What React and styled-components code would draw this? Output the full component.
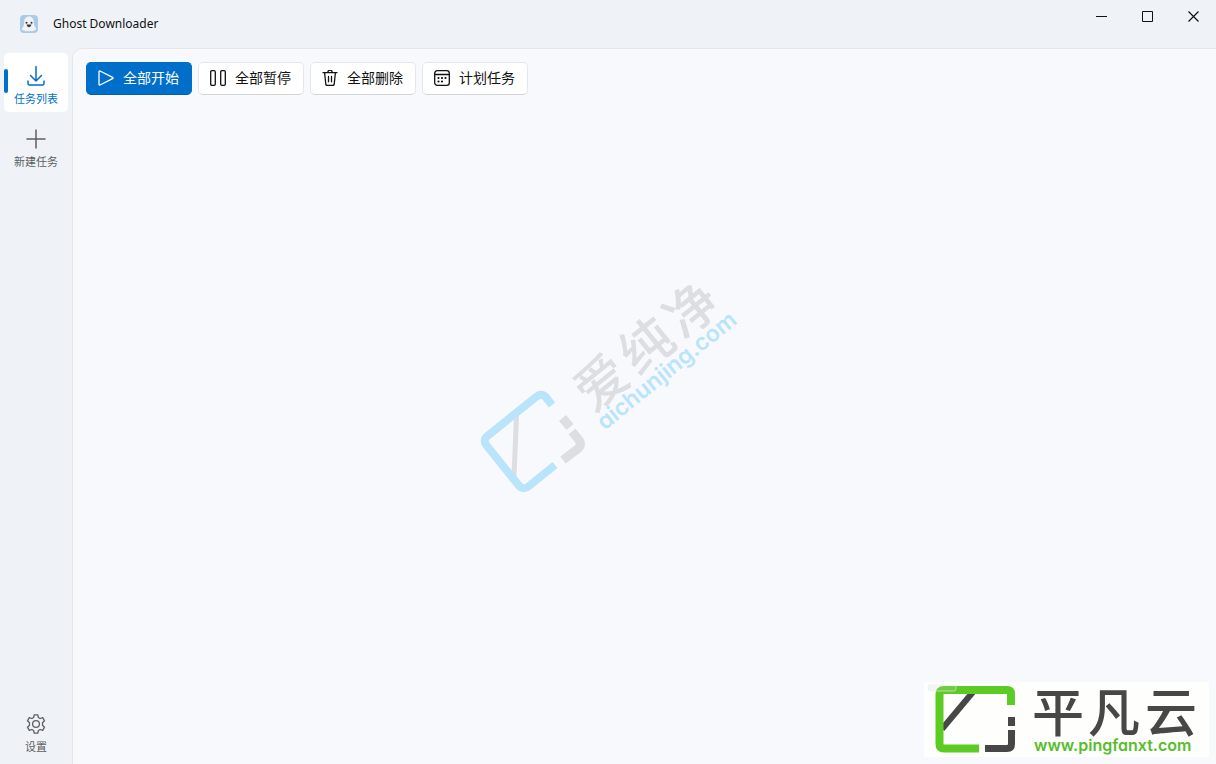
import React from "react";
import styled, { createGlobalStyle } from "styled-components";

const colors = {
    chrome: "#eff3f8",
    page: "#f8f9fd",
    line: "#e3e7ec",
    accent: "#006fca",
    muted: "#5d5f62",
    sky: "#b9e4fa",
    fog: "#dddee2",
    green: "#5ccb24",
    coal: "#474747",
};

const GlobalStyle = createGlobalStyle`
    * {
        box-sizing: border-box;
    }

    body {
        margin: 0;
        background: ${colors.chrome};
        font-family: "Noto Sans", "Noto Sans CJK SC", sans-serif;
    }

    button {
        font-family: inherit;
        cursor: pointer;
    }
`;

const Window = styled.div`
    display: flex;
    flex-direction: column;
    min-height: 100vh;
    position: relative;
    overflow: hidden;
`;

const TitleBar = styled.header`
    display: flex;
    align-items: center;
    height: 48px;
    padding-left: 20px;
`;

const Title = styled.h1`
    flex: 1;
    margin: 0 0 0 15px;
    font-size: 12px;
    font-weight: 400;
    line-height: 20px;
    color: #111;
`;

const WindowButtons = styled.div`
    display: flex;
    align-self: flex-start;
`;

const WindowButton = styled.button`
    display: flex;
    align-items: center;
    justify-content: center;
    width: 46px;
    height: 32px;
    padding: 0;
    border: 0;
    background: transparent;
    color: #111;
`;

const Body = styled.div`
    display: flex;
    flex: 1;
`;

const Sidebar = styled.nav`
    display: flex;
    flex-direction: column;
    gap: 4px;
    width: 72px;
    padding: 5px 4px 4px;
`;

const NavButton = styled.button`
    display: flex;
    position: relative;
    flex-direction: column;
    align-items: center;
    gap: 4px;
    height: 59px;
    padding: 12px 0 0;
    border: 0;
    border-radius: 5px;
    background: ${(props) => (props.$active ? "#fff" : "transparent")};
    color: ${(props) => (props.$active ? colors.accent : colors.muted)};
    font-size: 11px;
    line-height: 16px;

    &::before {
        content: "";
        display: ${(props) => (props.$active ? "block" : "none")};
        position: absolute;
        top: 16px;
        left: 0;
        width: 4px;
        height: 24px;
        border-radius: 2px;
        background: ${colors.accent};
    }
`;

const Spacer = styled.div`
    flex: 1;
`;

const Content = styled.main`
    flex: 1;
    padding: 13px;
    border: solid ${colors.line};
    border-width: 1px 0 0 1px;
    border-radius: 10px 0 0 0;
    background: ${colors.page};
`;

const Toolbar = styled.div`
    display: flex;
    flex-wrap: wrap;
    gap: 6px;
`;

const ToolButton = styled.button`
    display: flex;
    align-items: center;
    gap: 9px;
    height: 33px;
    padding: 0 12px 1px 11px;
    border: 1px solid ${(props) => (props.$primary ? colors.accent : "#e6e7eb")};
    border-bottom-color: ${(props) => (props.$primary ? "#0061b2" : "#d2d3d7")};
    border-radius: 5px;
    background: ${(props) => (props.$primary ? colors.accent : "#fff")};
    color: ${(props) => (props.$primary ? "#fff" : "#111")};
    font-size: 14px;
    line-height: 20px;
    white-space: nowrap;
`;

const Watermark = styled.svg`
    position: absolute;
    top: 50%;
    left: 50%;
    overflow: visible;
    transform: translate(-50%, -50%);
    pointer-events: none;
`;

const Badge = styled.div`
    position: absolute;
    right: 7px;
    bottom: 7px;
    background: #fefefd;
    pointer-events: none;

    svg {
        display: block;
        overflow: visible;
    }
`;

const SiteName = styled.text`
    font-family: Inter, sans-serif;
    font-size: ${(props) => props.$size}px;
    font-weight: 600;
    font-feature-settings: "cv11";
`;

const Icon = ({ size = 16, box = 16, children }) => (
    <svg
        width={size}
        height={size}
        viewBox={`0 0 ${box} ${box}`}
        fill="none"
        stroke="currentColor"
        strokeWidth="1.3"
        strokeLinecap="round"
        strokeLinejoin="round"
        aria-hidden="true"
    >
        {children}
    </svg>
);

const GhostIcon = () => (
    <svg width="18" height="18" viewBox="0 0 18 18" aria-hidden="true">
        <rect width="18" height="18" rx="4" fill="#a9cbe5" />
        <path
            d="M9 1.5C5.6 1.5 4.2 4 4.2 7c0 2.6-.5 4.3-2.1 6.1-.8 1.2.3 2.7 1.9 2.2.9 1.3 2.5 1.4 3.3.5.9.7 2.5.7 3.400 0 .8.9 2.4.8 3.3-.5 1.6.5 2.7-1 1.9-2.2-1.6-1.8-2.1-3.5-2.1-6.1C13.8 4 12.4 1.5 9 1.5Z"
            fill="#f1f2f4"
        />
        <circle cx="6.5" cy="7.8" r="1" fill="#333" />
        <circle cx="11.5" cy="7.8" r="1" fill="#333" />
        <path d="M6.6 9.6h4.8c-.2 3.4-4.600 3.4-4.800 0Z" fill="#3d3d42" />
    </svg>
);

const DownloadIcon = () => (
    <Icon size={22} box={22}>
        <g strokeWidth="1.5">
            <path d="M11 1.5v14M5.500 10.500 11 16l5.500-5.500" />
            <path d="M3 16v2.500A1.500 1.500 0 0 0 4.500 20h13a1.500 1.500 0 0 0 1.500-1.500V16" />
        </g>
    </Icon>
);

const PlusIcon = () => (
    <Icon size={22} box={22}>
        <path d="M11 2v18M2 11h18" strokeWidth="1.5" />
    </Icon>
);

const GearIcon = () => (
    <Icon size={22} box={22}>
        <circle cx="11" cy="11" r="3.4" />
        <path d="M9.2 1.8h3.6l.6 2.7 1.700 1 2.600-.8 1.800 3.100-2 1.900v2.600l2 1.900-1.800 3.100-2.600-.8-1.700 1-.6 2.700H9.200l-.6-2.700-1.700-1-2.600.8-1.800-3.100 2-1.900V9.700l-2-1.900 1.800-3.100 2.600.8 1.700-1Z" />
    </Icon>
);

const PlayIcon = () => (
    <Icon>
        <path d="M1 1.600v12.800c0 .6.5.8 1 .6l12.600-6.400c.6-.3.6-.9 0-1.200L2 1c-.5-.2-1 0-1 .6Z" />
    </Icon>
);

const PauseIcon = () => (
    <Icon>
        <rect x=".7" y=".7" width="4.6" height="14.6" rx="1.2" />
        <rect x="10.7" y=".7" width="4.6" height="14.6" rx="1.2" />
    </Icon>
);

const TrashIcon = () => (
    <Icon>
        <path d="M1 2.600h14M5.800 2.400a2.200 2.200 0 0 1 4.400 0M2.600 2.800l1.200 11.400c.1.7.5 1.200 1.200 1.200h6c.7 0 1.100-.5 1.200-1.200l1.200-11.400M6.500 6.400v5.400M9.500 6.400v5.400" />
    </Icon>
);

const CalendarIcon = () => (
    <Icon>
        <rect x=".7" y=".7" width="14.6" height="14.6" rx="2.6" />
        <path d="M.7 4.5h14.6" />
        <g fill="currentColor" stroke="none">
            <circle cx="4.5" cy="8" r="1.1" />
            <circle cx="8" cy="8" r="1.1" />
            <circle cx="11.5" cy="8" r="1.1" />
            <circle cx="4.5" cy="11.5" r="1.1" />
            <circle cx="8" cy="11.5" r="1.1" />
        </g>
    </Icon>
);

const SiteWatermark = () => (
    <Watermark width="280" height="240" viewBox="0 0 280 240">
        <g fill="none" strokeWidth="9" stroke={colors.fog}>
            <path d="M48.5 154 46 214" strokeWidth="5" />
            <path d="M94.5 156 102 165" />
            <path d="M104 169.5 110.500 177.500Q114.500 183 109.500 187L95 198" />
        </g>
        <path
            d="M84 143 78.5 136Q74 130 68 135L20 173.5Q14 178 19 184L50 222.5Q55 229 61 224L87 203"
            fill="none"
            stroke={colors.sky}
            strokeWidth="8"
        />
        <g transform="translate(136 168) rotate(-39)">
            <text
                x="2 60 118"
                y="-20"
                fill={colors.fog}
                fontFamily="Noto Sans CJK SC, sans-serif"
                fontSize="52"
                fontWeight="500"
            >
                爱纯净
            </text>
            <SiteName $size={23} y="1" fill={colors.sky}>
                aichunjing.com
            </SiteName>
        </g>
    </Watermark>
);

const SiteBadge = () => (
    <Badge>
        <svg width="285" height="75" viewBox="0 0 285 75">
            <g fill="none" stroke={colors.coal} strokeWidth="6">
                <path d="M18 47 49 10" />
                <path d="M87.5 35v9M87.5 48v14q0 4.5-4.500 4.500H61" strokeWidth="7" />
            </g>
            <path
                d="M87 23V12q0-4-4-4H20q-4.5 0-4.500 4.500V62q0 4.500 4.500 4.500h35"
                fill="none"
                stroke={colors.green}
                strokeWidth="8"
            />
            <rect
                x="4"
                y="3"
                width="28"
                height="6"
                rx="2"
                fill="#ccc"
                fillOpacity=".2"
                stroke="#eee"
                strokeOpacity=".6"
            />
            <text
                x="108 164 221"
                y="50"
                fill={colors.coal}
                fontFamily="Noto Sans CJK SC, sans-serif"
                fontSize="52"
                fontWeight="500"
            >
                平凡云
            </text>
            <SiteName $size={16} x="110" y="69" fill="#58bd2d">
                www.pingfanxt.com
            </SiteName>
        </svg>
    </Badge>
);

const App = () => (
    <Window>
        <GlobalStyle />
        <TitleBar>
            <GhostIcon />
            <Title>Ghost Downloader</Title>
            <WindowButtons>
                <WindowButton aria-label="最小化">
                    <svg width="11" height="11" stroke="currentColor">
                        <path d="M0 5.5h11" />
                    </svg>
                </WindowButton>
                <WindowButton aria-label="最大化">
                    <svg width="11" height="11" stroke="currentColor" fill="none">
                        <path d="M.5.5h10v10H.5Z" />
                    </svg>
                </WindowButton>
                <WindowButton aria-label="关闭">
                    <svg width="11" height="11" stroke="currentColor">
                        <path d="M.5.5l10 10M10.5.5l-10 10" strokeWidth="1.2" />
                    </svg>
                </WindowButton>
            </WindowButtons>
        </TitleBar>
        <Body>
            <Sidebar>
                <NavButton $active aria-current="page">
                    <DownloadIcon />
                    任务列表
                </NavButton>
                <NavButton>
                    <PlusIcon />
                    新建任务
                </NavButton>
                <Spacer />
                <NavButton>
                    <GearIcon />
                    设置
                </NavButton>
            </Sidebar>
            <Content>
                <Toolbar>
                    <ToolButton $primary>
                        <PlayIcon />
                        全部开始
                    </ToolButton>
                    <ToolButton>
                        <PauseIcon />
                        全部暂停
                    </ToolButton>
                    <ToolButton>
                        <TrashIcon />
                        全部删除
                    </ToolButton>
                    <ToolButton>
                        <CalendarIcon />
                        计划任务
                    </ToolButton>
                </Toolbar>
            </Content>
        </Body>
        <SiteWatermark />
        <SiteBadge />
    </Window>
);

export default App;
